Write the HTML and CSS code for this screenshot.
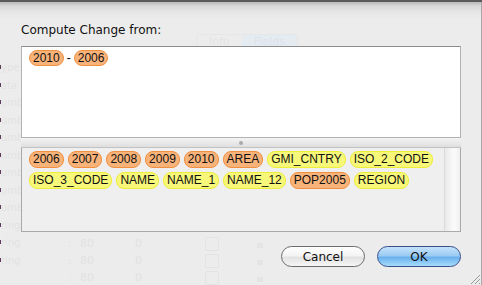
FILE: index.html
```html
<!DOCTYPE html>
<html lang="en">
<head>
<meta charset="UTF-8">
<title>Compute Change</title>
<link rel="stylesheet" href="styles.css">
</head>
<body>
<div class="window">
  <!-- faint window behind the sheet -->
  <div class="ghost">
    <div class="ghost-tabs"><span>Info</span><span class="on">Fields</span></div>
    <div class="ghost-labels">
      <span>ype</span><span>ata</span><span>umb</span><span>umb</span><span>umb</span><span>umb</span><span>umb</span><span>umb</span><span>umb</span><span>ring</span><span>ring</span><span>ring</span>
    </div>
    <div class="ghost-rows">
      <div class="ghost-row"><span class="c">:</span><span class="w">80</span><span class="d">0</span><span class="box"></span><span class="lock"></span></div>
      <div class="ghost-row"><span class="c">:</span><span class="w">80</span><span class="d">0</span><span class="box"></span><span class="lock"></span></div>
      <div class="ghost-row"><span class="c">:</span><span class="w">80</span><span class="d">0</span><span class="box"></span><span class="lock"></span></div>
    </div>
  </div>

  <div class="sheet">
    <div class="label">Compute Change from:</div>

    <div class="expr">
      <span class="pill orange">2010</span><span class="op">-</span><span class="pill orange">2006</span>
    </div>

    <div class="splitter"><span class="dot"></span></div>

    <div class="fields">
      <div class="tokens">
        <span class="pill orange">2006</span>
        <span class="pill orange">2007</span>
        <span class="pill orange">2008</span>
        <span class="pill orange">2009</span>
        <span class="pill orange">2010</span>
        <span class="pill orange">AREA</span>
        <span class="pill yellow">GMI_CNTRY</span>
        <span class="pill yellow">ISO_2_CODE</span>
        <span class="pill yellow">ISO_3_CODE</span>
        <span class="pill yellow">NAME</span>
        <span class="pill yellow">NAME_1</span>
        <span class="pill yellow">NAME_12</span>
        <span class="pill orange">POP2005</span>
        <span class="pill yellow">REGION</span>
      </div>
      <div class="scroller"></div>
    </div>

    <div class="buttons">
      <button class="btn">Cancel</button>
      <button class="btn default">OK</button>
    </div>
  </div>

  <svg class="grip" width="12" height="12" viewBox="0 0 12 12">
    <path d="M11 2 L2 11 M11 6 L6 11 M11 10 L10 11" stroke="#9a9a9a" stroke-width="1" fill="none"/>
  </svg>
</div>
</body>
</html>
```

FILE: styles.css
```css
body, html {
  margin: 0;
  padding: 0;
  background: #ececec;
}
.window {
  position: relative;
  width: 482px;
  height: 285px;
  overflow: hidden;
  background: linear-gradient(#b9b9b9 0, #d8d8d8 4px, #e6e6e6 10px, #ececec 18px);
  border-top: 2px solid #5a5a5a;
  box-sizing: border-box;
  font-family: "DejaVu Sans", sans-serif;
}
.window::after {
  content: "";
  position: absolute;
  top: 0;
  right: 0;
  bottom: 0;
  width: 1px;
  background: #a8a8a8;
}

/* ghost window */
.ghost {
  position: absolute;
  inset: 0;
  color: #e2e2e2;
  font-size: 12px;
}
.ghost-tabs {
  position: absolute;
  left: 196px;
  top: 32px;
  display: flex;
  border: 1px solid #e6e6e6;
  border-radius: 3px;
  height: 13px;
  overflow: hidden;
}
.ghost-tabs span {
  padding: 0 12px;
  font-size: 11px;
  line-height: 13px;
  color: #e4e4e4;
}
.ghost-tabs .on {
  background: #e4ebf1;
  color: #dde3e9;
}
.ghost-labels {
  position: absolute;
  left: 0;
  top: 57px;
  display: flex;
  flex-direction: column;
}
.ghost-labels span {
  position: relative;
  height: 17.5px;
  line-height: 17px;
  font-size: 10px;
  padding-left: 1px;
  color: #e3e3e3;
}
.ghost-labels span::before {
  content: "";
  position: absolute;
  left: 0;
  top: 6px;
  width: 1px;
  height: 4px;
  background: #5c3c5a;
}
.ghost-rows {
  position: absolute;
  left: 0;
  top: 233px;
}
.ghost-row {
  height: 17px;
  display: flex;
  align-items: center;
  font-size: 11px;
  color: #e2e2e2;
}
.ghost-row .c { margin-left: 68px; width: 12px; }
.ghost-row .w { width: 55px; }
.ghost-row .d { width: 70px; }
.ghost-row .box {
  width: 12px;
  height: 12px;
  border: 1px solid #e3e3e3;
  border-radius: 2px;
}
.ghost-row .lock {
  margin-left: 38px;
  width: 6px;
  height: 5px;
  background: #e4e4e4;
  margin-top: 4px;
}

/* sheet */
.sheet {
  position: relative;
  z-index: 1;
  margin-left: 21px;
  width: 440px;
  padding-top: 21px;
}
.label {
  font-size: 12px;
  line-height: 15px;
  color: #111;
  height: 23px;
}
.expr {
  height: 92px;
  box-sizing: border-box;
  background: #fff;
  border: 1px solid #b3b3b3;
  border-top-color: #8c8c8c;
  padding: 3px 7px;
  display: flex;
  align-items: flex-start;
}
.op {
  margin: 0 3px;
  font-family: "Liberation Sans", Arial, sans-serif;
  font-size: 12px;
  line-height: 16px;
}
.pill {
  display: inline-block;
  font-family: "Liberation Sans", Arial, sans-serif;
  font-size: 12px;
  line-height: 14px;
  padding: 0 3px;
  border: 1px solid;
  border-radius: 8px;
  color: #111;
}
.orange {
  background: #f8b37a;
  border-color: #f0903f;
}
.yellow {
  background: #f7f77a;
  border-color: #eded3a;
}
.splitter {
  height: 10px;
  background: linear-gradient(#f4f4f4, #dedede);
  border-bottom: 1px solid #c2c2c2;
  box-sizing: border-box;
  display: flex;
  align-items: center;
  justify-content: center;
}
.dot {
  width: 4px;
  height: 4px;
  border-radius: 50%;
  background: #a9a9a9;
}
.fields {
  height: 84px;
  box-sizing: border-box;
  border: 1px solid #a9a9a9;
  border-top: none;
  background: #efefef;
  display: flex;
}
.tokens {
  flex: 1;
  padding: 3px 7px;
  display: flex;
  flex-wrap: wrap;
  align-content: flex-start;
  gap: 4px;
}
.tokens .pill {
  line-height: 15px;
}
.scroller {
  width: 15px;
  border-left: 1px solid #dadada;
  background: linear-gradient(90deg, #e9e9e9, #fbfbfb 60%, #f0f0f0);
}
.buttons {
  display: flex;
  justify-content: flex-end;
  gap: 12px;
  margin-top: 14px;
}
.btn {
  width: 84px;
  height: 21px;
  border-radius: 11px;
  border: 1px solid #6b6b6b;
  background: linear-gradient(#ffffff 0%, #f3f3f3 45%, #e2e2e2 55%, #f6f6f6 100%);
  font-family: "DejaVu Sans", sans-serif;
  font-size: 12px;
  color: #111;
  padding: 0;
}
.btn.default {
  border-color: #37508a;
  background: linear-gradient(#c6e2fb 0%, #9ccbf4 45%, #6bb1ee 55%, #a6dcfb 100%);
}
.grip {
  position: absolute;
  right: 1px;
  bottom: 0;
}
```
